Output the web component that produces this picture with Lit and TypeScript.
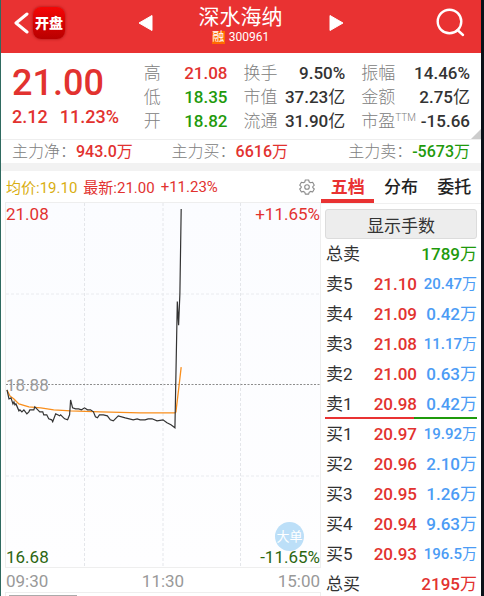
import { LitElement, html, svg, css } from "lit";
import { customElement, state } from "lit/decorators.js";
import { classMap } from "lit/directives/class-map.js";

type Tone = "up" | "down" | "plain";
interface Stat { label: string; sup?: string; value: string; tone: Tone }
interface Level { label: string; price: string; volume: string }

const STATS: Stat[][] = [
  [
    { label: "高", value: "21.08", tone: "up" },
    { label: "低", value: "18.35", tone: "down" },
    { label: "开", value: "18.82", tone: "down" },
  ],
  [
    { label: "换手", value: "9.50%", tone: "plain" },
    { label: "市值", value: "37.23亿", tone: "plain" },
    { label: "流通", value: "31.90亿", tone: "plain" },
  ],
  [
    { label: "振幅", value: "14.46%", tone: "plain" },
    { label: "金额", value: "2.75亿", tone: "plain" },
    { label: "市盈", sup: "TTM", value: "-15.66", tone: "plain" },
  ],
];

const FLOWS: Stat[] = [
  { label: "主力净：", value: "943.0万", tone: "up" },
  { label: "主力买：", value: "6616万", tone: "up" },
  { label: "主力卖：", value: "-5673万", tone: "down" },
];

const SELLS: Level[] = [
  { label: "卖5", price: "21.10", volume: "20.47万" },
  { label: "卖4", price: "21.09", volume: "0.42万" },
  { label: "卖3", price: "21.08", volume: "11.17万" },
  { label: "卖2", price: "21.00", volume: "0.63万" },
  { label: "卖1", price: "20.98", volume: "0.42万" },
];

const BUYS: Level[] = [
  { label: "买1", price: "20.97", volume: "19.92万" },
  { label: "买2", price: "20.96", volume: "2.10万" },
  { label: "买3", price: "20.95", volume: "1.26万" },
  { label: "买4", price: "20.94", volume: "9.63万" },
  { label: "买5", price: "20.93", volume: "196.5万" },
];

const PRICE_LINE =
  "1,188 3,197 5,196 7,202 8,200 9,203 10,202 13,209 14,208 16,210 18,208 21,212 23,210 24,208 28,208 29,205 32,208 34,210 37,210 38,213 41,213 43,217 46,218 47,220 50,212 52,213 54,214 55,213 57,215 59,217 62,218 64,213 65,198 67,206 70,207 73,207 76,208 79,206 82,208 85,208 88,210 90,215 92,216 94,213 98,213 102,214 105,218 108,219 111,216 113,214 120,216 128,218 132,217 135,218 140,218 143,217 147,217 152,219 158,218 162,221 166,223 170,226 172.4,99 173.7,123 175,91 176.3,6";
const AVERAGE_LINE =
  "1,188 4,194 8,197 13,202 23,205 35,206 48,208 65,209 95,210 135,211 170,211 171,210 174,185 176.3,165";

/** Splits a trailing 万/亿 off so that it can be set in a lighter weight. */
const amount = (value: string) => {
  const unit = /[万亿]$/.exec(value)?.[0] ?? "";
  return html`${value.slice(0, value.length - unit.length)}${unit ? html`<span class="unit">${unit}</span>` : ""}`;
};

const shared = css`
  * { box-sizing: border-box; }
  button { margin: 0; padding: 0; border: 0; background: none; font: inherit; color: inherit; cursor: pointer; }
  svg { display: block; }
  .up { color: #e2322f; }
  .down { color: #1f9a0c; }
  .plain { color: #333; }
  .unit { font-weight: 400; }
`;

@customElement("stock-header")
class StockHeader extends LitElement {
  static styles = [shared, css`
    :host { display: block; background: #e93232; color: #fff; }
    .bar { height: 53px; padding: 0 14px 0 13px; display: grid; grid-template-columns: 1fr 206px 1fr; }
    .start { display: flex; align-items: center; gap: 4px; height: 46px; }
    .logo { width: 32px; height: 32px; border-radius: 8px; background: linear-gradient(#f50505, #b80000); box-shadow: 0 0 3px #a01010; font-size: 14px; font-weight: 900; line-height: 32px; text-align: center; white-space: nowrap; }
    .middle { display: flex; align-items: center; justify-content: space-between; height: 46px; }
    .name { align-self: flex-start; padding-top: 4px; text-align: center; }
    h1 { margin: 0; font-size: 21px; line-height: 26px; font-weight: 400; }
    .code { display: flex; justify-content: center; align-items: center; gap: 4px; font-size: 12px; line-height: 14px; }
    .tag { width: 13px; height: 13px; background: #ff6a00; font-size: 12px; line-height: 13px; display: flex; justify-content: center; }
    .end { display: flex; align-items: center; justify-content: flex-end; height: 46px; }
  `];
  render() {
    return html`<header class="bar">
      <div class="start">
        <button aria-label="返回"><svg width="15" height="24" viewBox="0 0 15 24"><path d="M13 3 2 12l11 9" fill="none" stroke="#fff" stroke-width="3" stroke-linecap="round" stroke-linejoin="round"/></svg></button>
        <div class="logo">开盘</div>
      </div>
      <div class="middle">
        <button aria-label="上一只"><svg width="15" height="18" viewBox="0 0 15 18"><path d="M1 9 14 1.500v15z" fill="#fff" stroke="#fff" stroke-linejoin="round"/></svg></button>
        <div class="name">
          <h1>深水海纳</h1>
          <div class="code"><span class="tag">融</span>300961</div>
        </div>
        <button aria-label="下一只"><svg width="15" height="18" viewBox="0 0 15 18"><path d="M14 9 1 1.500v15z" fill="#fff" stroke="#fff" stroke-linejoin="round"/></svg></button>
      </div>
      <div class="end">
        <button aria-label="搜索"><svg width="32" height="30" viewBox="0 0 32 30"><g fill="none" stroke="#fff" stroke-width="2.400" stroke-linecap="round"><circle cx="14.500" cy="13.500" r="11.800"/><path d="m22.500 22 5.500 5"/></g></svg></button>
      </div>
    </header>`;
  }
}

@customElement("stock-summary")
class StockSummary extends LitElement {
  static styles = [shared, css`
    :host { display: block; position: relative; }
    .summary { height: 86px; padding: 8px 11px 0 11px; display: grid; grid-template-columns: 116fr 84fr 102fr 109fr; gap: 16px; }
    .last { font-size: 36px; line-height: 44px; font-weight: 500; }
    .change { display: flex; gap: 12px; font-size: 18px; line-height: 24px; font-weight: 500; }
    dl { margin: 0; }
    .stat { display: flex; justify-content: space-between; font-size: 17px; line-height: 24px; height: 24px; white-space: nowrap; }
    dt { color: #808080; font-weight: 300; display: flex; }
    sup { font-size: 10px; line-height: 17px; }
    dd { margin: 0; font-weight: 500; }
    .corner { position: absolute; right: 0; top: 76px; border-style: solid; border-width: 0 0 10px 10px; border-color: transparent transparent #ccc; }
    .flows { height: 24px; border-top: 1px solid #eee; padding: 0 11px 0 11px; display: grid; grid-template-columns: 160fr 177fr 122fr; }
    .flow { display: flex; font-size: 16px; line-height: 23px; white-space: nowrap; }
  `];
  render() {
    return html`
      <section class="summary">
        <div class="up">
          <div class="last">21.00</div>
          <div class="change"><span>2.12</span><span>11.23%</span></div>
        </div>
        ${STATS.map((column) => html`<dl>${column.map((s) => html`<div class="stat">
          <dt>${s.label}${s.sup ? html`<sup>${s.sup}</sup>` : ""}</dt><dd class=${s.tone}>${amount(s.value)}</dd>
        </div>`)}</dl>`)}
      </section>
      <span class="corner"></span>
      <dl class="flows">${FLOWS.map((f) => html`<div class="flow"><dt>${f.label}</dt><dd class=${f.tone}>${amount(f.value)}</dd></div>`)}</dl>`;
  }
}

@customElement("minute-chart")
class MinuteChart extends LitElement {
  static styles = [shared, css`
    :host { display: grid; grid-template-rows: 31px 1fr 24px 4px; min-width: 0; padding-left: 4px; }
    .legend { display: flex; align-items: center; gap: 6px; padding: 0 6px 0 1px; font-size: 15px; white-space: nowrap; }
    .average { color: #d9ae10; }
    .settings { margin-left: auto; }
    .plot { position: relative; min-height: 0; background: linear-gradient(#fbfcff, #fefeff); border: 1px solid #eee; }
    .plot svg { position: absolute; inset: 0; width: 100%; height: 100%; }
    polyline, line { fill: none; vector-effect: non-scaling-stroke; }
    .mark { position: absolute; font-size: 17px; line-height: 20px; }
    .top { top: 1px; }
    .middle { top: 50%; margin-top: -10px; color: #999; }
    .bottom { bottom: 0; color: #2c6610; }
    .left { left: 0; }
    .right { right: 0; }
    .big { position: absolute; right: 16px; bottom: 16px; width: 29px; height: 29px; border-radius: 50%; background: #bcdff8; color: #fff; font-size: 13px; line-height: 29px; text-align: center; }
    .times { display: flex; justify-content: space-between; padding: 0 1px; color: #999; font-size: 17px; line-height: 26px; }
    .next { border: 1px solid #eee; border-bottom: 0; padding: 2px 0 0 3px; }
    .next i { display: block; width: 68px; height: 1px; background: #aaa; }
  `];
  render() {
    return html`
      <div class="legend">
        <span class="average">均价:19.10</span><span class="up">最新:21.00</span><span class="up">+11.23%</span>
        <button class="settings" aria-label="设置"><svg width="16" height="16" viewBox="0 0 16 16"><g fill="none" stroke="#8b8b8b" stroke-width="1.100" stroke-linejoin="round"><path d="M6.300 1h3.400l.5 2 1.400.8 2-.6 1.700 3-1.500 1.400v1.100l1.500 1.300-1.700 3-2-.6-1.400.8-.5 1.900H6.300l-.5-1.900-1.400-.8-2 .6-1.700-3 1.500-1.300V7.600L.7 6.200l1.700-3 2 .6 1.400-.8z"/><circle cx="8" cy="8" r="2.300"/></g></svg></button>
      </div>
      <div class="plot">
        <svg viewBox="0 0 316 366" preserveAspectRatio="none">
          ${[79, 158, 236].map((x) => svg`<line x1=${x} x2=${x} y1="0" y2="366" stroke="#e4e6ea" stroke-dasharray="3 2"/>`)}
          ${[91.5, 274.5].map((y) => svg`<line x1="0" x2="316" y1=${y} y2=${y} stroke="#e9ebef" stroke-dasharray="3 2"/>`)}
          <line x1="0" x2="316" y1="182.500" y2="182.500" stroke="#8c8c8c" stroke-dasharray="2 1.500"/>
          <polyline points=${AVERAGE_LINE} stroke="#f98f1d" stroke-width="1.300"/>
          <polyline points=${PRICE_LINE} stroke="#333" stroke-width="1.200"/>
        </svg>
        <span class="mark top left up">21.08</span>
        <span class="mark top right up">+11.65%</span>
        <span class="mark middle left">18.88</span>
        <button class="big">大单</button>
        <span class="mark bottom left">16.68</span>
        <span class="mark bottom right">-11.65%</span>
      </div>
      <div class="times"><span>09:30</span><span>11:30</span><span>15:00</span></div>
      <div class="next"><i></i></div>`;
  }
}

@customElement("order-book")
class OrderBook extends LitElement {
  @state() tab = "五档";
  static styles = [shared, css`
    :host { display: block; }
    .tabs { display: grid; grid-template-columns: repeat(3, 1fr); height: 33px; border-bottom: 1px solid #f0f0f0; }
    .tab { font-size: 17px; font-weight: 500; color: #222; border-bottom: 4px solid transparent; white-space: nowrap; }
    .tab.active { color: #e93232; font-weight: 700; border-color: #e93232; }
    .body { padding: 5px 4px 0; }
    .toggle { display: block; width: 100%; height: 30px; border: 1px solid #dcdcdc; border-radius: 3px; background: #ededed; color: #333; font-size: 17px; }
    table { width: 100%; border-collapse: collapse; table-layout: fixed; }
    tr { height: 30px; }
    th, td { padding: 0; font-size: 17px; line-height: 20px; text-align: right; white-space: nowrap; font-weight: 500; }
    th { text-align: left; font-weight: 400; color: #333; padding-left: 1px; }
    .label-col { width: 40px; }
    .price-col { width: 52px; }
    .price { color: #e2322f; }
    .volume { color: #4c9cf5; }
    .small { font-size: 15px; }
    .ratio { display: grid; grid-template-columns: 89fr 63fr; height: 2px; margin-top: -2px; }
    .ratio .buy { background: #e93232; }
    .ratio .sell { background: #1f9a0c; }
  `];
  private level = (l: Level) => html`<tr>
    <th scope="row">${l.label}</th><td class="price">${l.price}</td>
    <td class=${classMap({ volume: true, small: l.volume.length > 5 })}>${amount(l.volume)}</td>
  </tr>`;
  render() {
    return html`
      <div class="tabs" role="tablist">${["五档", "分布", "委托"].map((name) => html`<button
        role="tab" aria-selected=${name === this.tab} class=${classMap({ tab: true, active: name === this.tab })}
        @click=${() => (this.tab = name)}>${name}</button>`)}</div>
      <div class="body">
        <button class="toggle">显示手数</button>
        <table>
          <colgroup><col class="label-col"><col class="price-col"><col></colgroup>
          <tr><th scope="row">总卖</th><td class="down" colspan="2">${amount("1789万")}</td></tr>
          ${SELLS.map(this.level)}
        </table>
        <div class="ratio"><span class="buy"></span><span class="sell"></span></div>
        <table>
          <colgroup><col class="label-col"><col class="price-col"><col></colgroup>
          ${BUYS.map(this.level)}
          <tr><th scope="row">总买</th><td class="up" colspan="2">${amount("2195万")}</td></tr>
        </table>
      </div>`;
  }
}

@customElement("app-root")
class AppRoot extends LitElement {
  static styles = css`
    :host { display: flex; flex-direction: column; box-sizing: border-box; height: 100vh; overflow: hidden; background: #fff; border-left: 1px solid #2f6a60; border-right: 3px solid #0a1118; font-family: Roboto, "Noto Sans CJK SC", sans-serif; }
    .gap { flex: none; height: 8px; background: #f2f2f2; }
    .main { flex: 1; min-height: 0; display: grid; grid-template-columns: minmax(0, 2fr) minmax(0, 1fr); grid-template-rows: minmax(0, 1fr); }
  `;
  render() {
    return html`
      <stock-header></stock-header>
      <stock-summary></stock-summary>
      <div class="gap"></div>
      <main class="main"><minute-chart></minute-chart><order-book></order-book></main>`;
  }
}
